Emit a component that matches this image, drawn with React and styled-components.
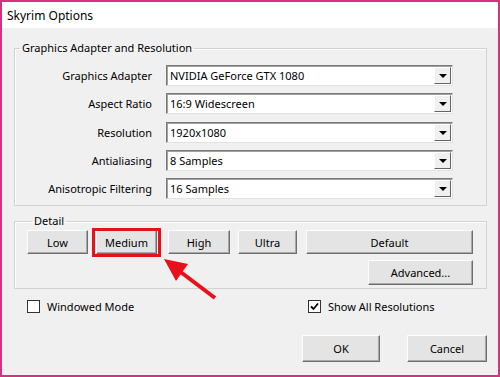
import React from 'react';
import styled, { createGlobalStyle } from 'styled-components';

const Global = createGlobalStyle`
	html, body {
		margin: 0;
		padding: 0;
		background: #f0f0f0;
	}
	* {
		box-sizing: border-box;
	}
`;

const Window = styled.div`
	position: relative;
	width: 500px;
	height: 377px;
	border: 2px solid #d4317f;
	background: #f0f0f0;
	font-family: "Noto Sans", "Liberation Sans", sans-serif;
	font-size: 11px;
	color: #000;
	display: flex;
	flex-direction: column;
	overflow: hidden;
`;

const TitleBar = styled.div`
	height: 26px;
	flex: none;
	background: #fff;
	display: flex;
	align-items: center;
	padding-left: 5px;
	font-size: 12px;
`;

const Body = styled.div`
	flex: 1;
	display: flex;
	flex-direction: column;
	padding: 12px 11px 0 12px;
`;

const Group = styled.fieldset`
	margin: 0;
	margin-top: ${p => p.$top || 0}px;
	padding: ${p => p.$pad};
	border: 1px solid #d2d2d2;
	box-shadow: inset 1px 1px 0 #fff;
	min-width: 0;
`;

const Legend = styled.legend`
	padding: 0 2px;
	margin-left: 5px;
	line-height: 16px;
`;

const FormGrid = styled.div`
	display: grid;
	grid-template-columns: 137px 287px;
	column-gap: 14px;
	row-gap: 7.3px;
	align-items: center;
`;

const Label = styled.div`
	text-align: right;
	white-space: nowrap;
`;

const Select = styled.div`
	height: 21px;
	display: flex;
	align-items: center;
	background: #fff;
	border: 1px solid;
	border-color: #7a7a7a #e3e3e3 #e3e3e3 #7a7a7a;
	box-shadow: inset 1px 1px 0 #a0a0a0;
	padding-left: 3px;
`;

const SelectText = styled.span`
	flex: 1;
	white-space: nowrap;
`;

const DropButton = styled.div`
	width: 17px;
	height: 17px;
	margin-right: 1px;
	background: #f0f0f0;
	border: 1px solid;
	border-color: #fff #646464 #646464 #fff;
	display: flex;
	align-items: center;
	justify-content: center;
	&::after {
		content: '';
		border-left: 4px solid transparent;
		border-right: 4px solid transparent;
		border-top: 4px solid #000;
		margin-top: 1px;
	}
`;

const ButtonRow = styled.div`
	display: flex;
	justify-content: ${p => p.$end ? 'flex-end' : 'flex-start'};
	margin-top: ${p => p.$top || 0}px;
`;

const Button = styled.div`
	width: ${p => p.$w}px;
	height: ${p => p.$h || 24}px;
	margin-left: ${p => p.$ml || 0}px;
	background: #e4e4e4;
	border: 1px solid;
	border-color: #fdfdfd #6e6e6e #6e6e6e #fdfdfd;
	box-shadow: inset -1px -1px 0 #a8a8a8;
	display: flex;
	align-items: center;
	justify-content: center;
	position: relative;
`;

const Highlight = styled.div`
	position: absolute;
	inset: -3px -5px -4px -5px;
	border: 3px solid #e8101a;
	pointer-events: none;
`;

const CheckRow = styled.div`
	display: grid;
	grid-template-columns: 281px auto;
	align-items: center;
	margin-top: 10px;
	padding-left: 13px;
`;

const Check = styled.label`
	display: flex;
	align-items: center;
	gap: 7px;
`;

const Box = styled.span`
	width: 13px;
	height: 13px;
	background: #fff;
	border: 1px solid #333;
	display: flex;
	align-items: center;
	justify-content: center;
`;

const Arrow = styled.svg`
	position: absolute;
	left: 0;
	top: 0;
	pointer-events: none;
`;

const rows = [
	['Graphics Adapter', 'NVIDIA GeForce GTX 1080'],
	['Aspect Ratio', '16:9 Widescreen'],
	['Resolution', '1920x1080'],
	['Antialiasing', '8 Samples'],
	['Anisotropic Filtering', '16 Samples'],
];

export default function App() {
	return (
		<Window>
			<Global />
			<TitleBar>Skyrim Options</TitleBar>
			<Body>
				<Group $pad="9px 0 6px 0">
					<Legend>Graphics Adapter and Resolution</Legend>
					<FormGrid>
						{rows.map(([label, value]) => (
							<React.Fragment key={label}>
								<Label>{label}</Label>
								<Select>
									<SelectText>{value}</SelectText>
									<DropButton />
								</Select>
							</React.Fragment>
						))}
					</FormGrid>
				</Group>
				<Group $top={7} $pad="1px 0 3px 12px">
					<Legend>Detail</Legend>
					<ButtonRow>
						<Button $w={61}>Low</Button>
						<Button $w={61} $ml={8}>
							Medium
							<Highlight />
						</Button>
						<Button $w={62} $ml={11}>High</Button>
						<Button $w={59} $ml={8}>Ultra</Button>
						<Button $w={167} $ml={9}>Default</Button>
					</ButtonRow>
					<ButtonRow $top={6}>
						<Button $w={105} $h={25} $ml={341}>Advanced...</Button>
					</ButtonRow>
				</Group>
				<CheckRow>
					<Check>
						<Box />
						Windowed Mode
					</Check>
					<Check>
						<Box>
							<svg width="9" height="9" viewBox="0 0 9 9">
								<path d="M1 4.5 L3.5 7 L8 1.5" fill="none" stroke="#000" strokeWidth="1.8" />
							</svg>
						</Box>
						Show All Resolutions
					</Check>
				</CheckRow>
				<ButtonRow $end $top={21}>
					<Button $w={78} $h={27}>OK</Button>
					<Button $w={80} $h={27} $ml={27}>Cancel</Button>
				</ButtonRow>
			</Body>
			<Arrow width="500" height="377" viewBox="0 0 500 377">
				<line x1="213" y1="296" x2="176" y2="268" stroke="#e8101a" strokeWidth="4" />
				<polygon points="162,257 186,262 174,279" fill="#e8101a" />
			</Arrow>
		</Window>
	);
}
